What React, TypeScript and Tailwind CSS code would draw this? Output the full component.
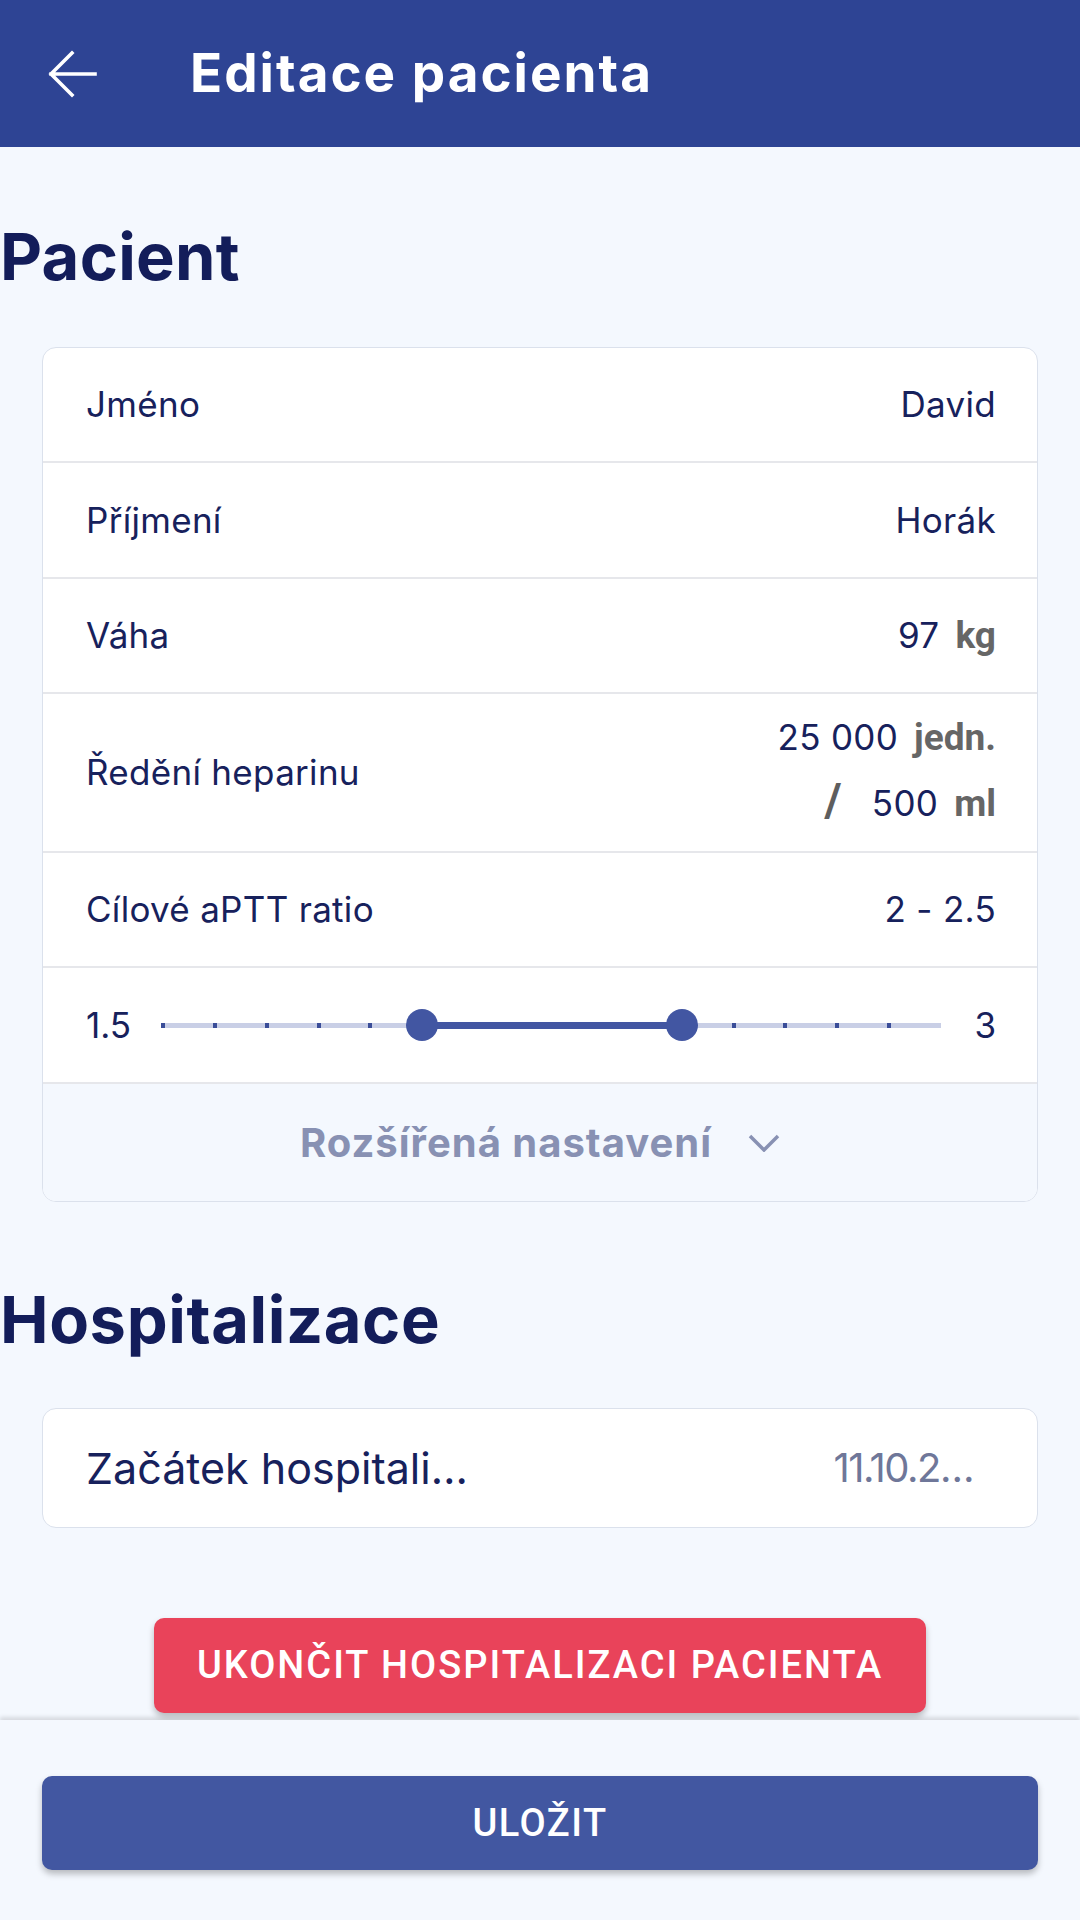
import React from "react";

// ============================================
// DATA
// ============================================

const body = { fontFamily: "Inter, 'Noto Sans', sans-serif" };
const heading = { fontFamily: "Inter, 'Noto Sans', sans-serif" };
const unitFont = { fontFamily: "Roboto, 'Liberation Sans', sans-serif" };

const MIN = 1.5;
const MAX = 3;
const STEP = 0.1;
const range: [number, number] = [2, 2.5];

const steps = Math.round((MAX - MIN) / STEP);

function pct(v: number) {
  return ((v - MIN) / (MAX - MIN)) * 100;
}

// ============================================
// PIECES
// ============================================

function Row({
  label,
  children,
  className = "h-[116px]",
}: {
  label: string;
  children: React.ReactNode;
  className?: string;
}) {
  return (
    <div
      className={`flex items-center justify-between pl-[43px] pr-[41px] border-b-2 border-[#e6e7eb] ${className}`}
    >
      <span className="text-[35px] tracking-[0.3px] text-[#17215c]">{label}</span>
      <div className="flex flex-col items-end text-[35px] tracking-[0.3px] text-[#17215c]">
        {children}
      </div>
    </div>
  );
}

function Unit({ children }: { children: React.ReactNode }) {
  return (
    <span className="text-[37px] font-bold tracking-normal text-[#666666] ml-[16px]" style={unitFont}>
      {children}
    </span>
  );
}

function RangeSlider() {
  const lo = pct(range[0]);
  const hi = pct(range[1]);
  const ticks = Array.from({ length: steps }, (_, i) => (i / steps) * 100).filter(
    (p) => p < lo - 0.1 || p > hi + 0.1
  );

  return (
    <div className="flex items-center h-[116px] border-b-2 border-[#e6e7eb] text-[35px] text-[#17215c]">
      <span className="w-[120px] pl-[43px]">1.5</span>
      <div className="relative flex-1 h-[5px] bg-[#c9cfe6]">
        <div
          className="absolute top-[-1px] h-[7px] bg-[#4256a2]"
          style={{ left: `${lo}%`, width: `${hi - lo}%` }}
        />
        {ticks.map((p) => (
          <div
            key={p}
            className="absolute top-0 w-[4px] h-[5px] -ml-[2px] bg-[#3a4d98]"
            style={{ left: `${p}%` }}
          />
        ))}
        {[lo, hi].map((p) => (
          <div
            key={p}
            className="absolute top-[-14px] w-[32px] h-[32px] -ml-[16px] rounded-full bg-[#4256a2]"
            style={{ left: `${p}%` }}
          />
        ))}
      </div>
      <span className="w-[96px] pr-[41px] text-right">3</span>
    </div>
  );
}

// ============================================
// MAIN COMPONENT
// ============================================

export default function App() {
  return (
    <div className="w-[1080px] h-[1920px] flex flex-col bg-[#f4f8fe] overflow-hidden" style={body}>
      {/* Header */}
      <header className="h-[147px] shrink-0 flex items-center bg-[#2e4494]">
        <svg width="66" height="66" viewBox="0 0 66 66" className="ml-[40px]" fill="none">
          <path
            d="M55 33H11M11 33L32 12M11 33L32 54"
            stroke="white"
            strokeWidth="3.6"
            strokeLinecap="square"
          />
        </svg>
        <h1
          className="ml-[84px] text-[53px] font-bold tracking-[2px] text-white leading-none"
          style={heading}
        >
          Editace pacienta
        </h1>
      </header>

      {/* Scroll content */}
      <main className="flex-1 flex flex-col overflow-hidden">
        <h2
          className="pt-[77px] pb-[58px] text-[65px] font-bold tracking-[0.3px] leading-none text-[#131d5a]"
          style={heading}
        >
          Pacient
        </h2>

        <section className="mx-[42px] rounded-[14px] border border-[#dbe1ec] bg-white overflow-hidden">
          <Row label="Jméno" className="h-[115px]">
            <span>David</span>
          </Row>
          <Row label="Příjmení">
            <span>Horák</span>
          </Row>
          <Row label="Váha" className="h-[115px]">
            <div className="flex items-baseline">
              <span>97</span>
              <Unit>kg</Unit>
            </div>
          </Row>
          <Row label="Ředění heparinu" className="h-[159px]">
            <div className="flex items-baseline">
              <span>25 000</span>
              <Unit>jedn.</Unit>
            </div>
            <div className="flex items-baseline">
              <span className="text-[46px] font-bold text-[#5e5e5e] mr-[30px]" style={unitFont}>
                /
              </span>
              <span>500</span>
              <Unit>ml</Unit>
            </div>
          </Row>
          <Row label="Cílové aPTT ratio" className="h-[115px]">
            <span>2 - 2.5</span>
          </Row>
          <RangeSlider />
          <button className="w-full h-[117px] flex items-center justify-center bg-[#f4f8fe] text-[40px] font-bold tracking-[1px] text-[#8891b3]">
            Rozšířená nastavení
            <svg width="32" height="18" viewBox="0 0 32 18" fill="none" className="ml-[36px]">
              <path d="M2 2L16 16L30 2" stroke="#8891b3" strokeWidth="3.5" />
            </svg>
          </button>
        </section>

        <h2
          className="pt-[85px] pb-[56px] text-[65px] font-bold tracking-[0.6px] leading-none text-[#131d5a]"
          style={heading}
        >
          Hospitalizace
        </h2>

        <section className="mx-[42px] h-[120px] flex items-center justify-between pl-[43px] pr-[64px] rounded-[14px] border border-[#dbe1ec] bg-white">
          <span className="text-[43px] text-[#17215c]">Začátek hospitali…</span>
          <span className="text-[40px] tracking-[-1.5px] text-[#6f7799]">11.10.2…</span>
        </section>

        <div className="flex justify-center mt-[90px]">
          <button
            className="w-[772px] h-[95px] rounded-[10px] bg-[#e9435a] text-white text-[38px] font-medium tracking-[2px] shadow-[0_4px_6px_rgba(0,0,0,0.25)]"
            style={unitFont}
          >
            UKONČIT HOSPITALIZACI PACIENTA
          </button>
        </div>
      </main>

      {/* Bottom bar */}
      <footer className="h-[200px] shrink-0 px-[42px] pt-[56px] bg-[#f4f8fe] shadow-[0_-3px_4px_rgba(0,0,0,0.12)] relative">
        <button
          className="w-full h-[94px] rounded-[10px] bg-[#4257a1] text-white text-[38px] font-medium tracking-[1.5px] shadow-[0_4px_6px_rgba(0,0,0,0.25)]"
          style={unitFont}
        >
          ULOŽIT
        </button>
      </footer>
    </div>
  );
}
